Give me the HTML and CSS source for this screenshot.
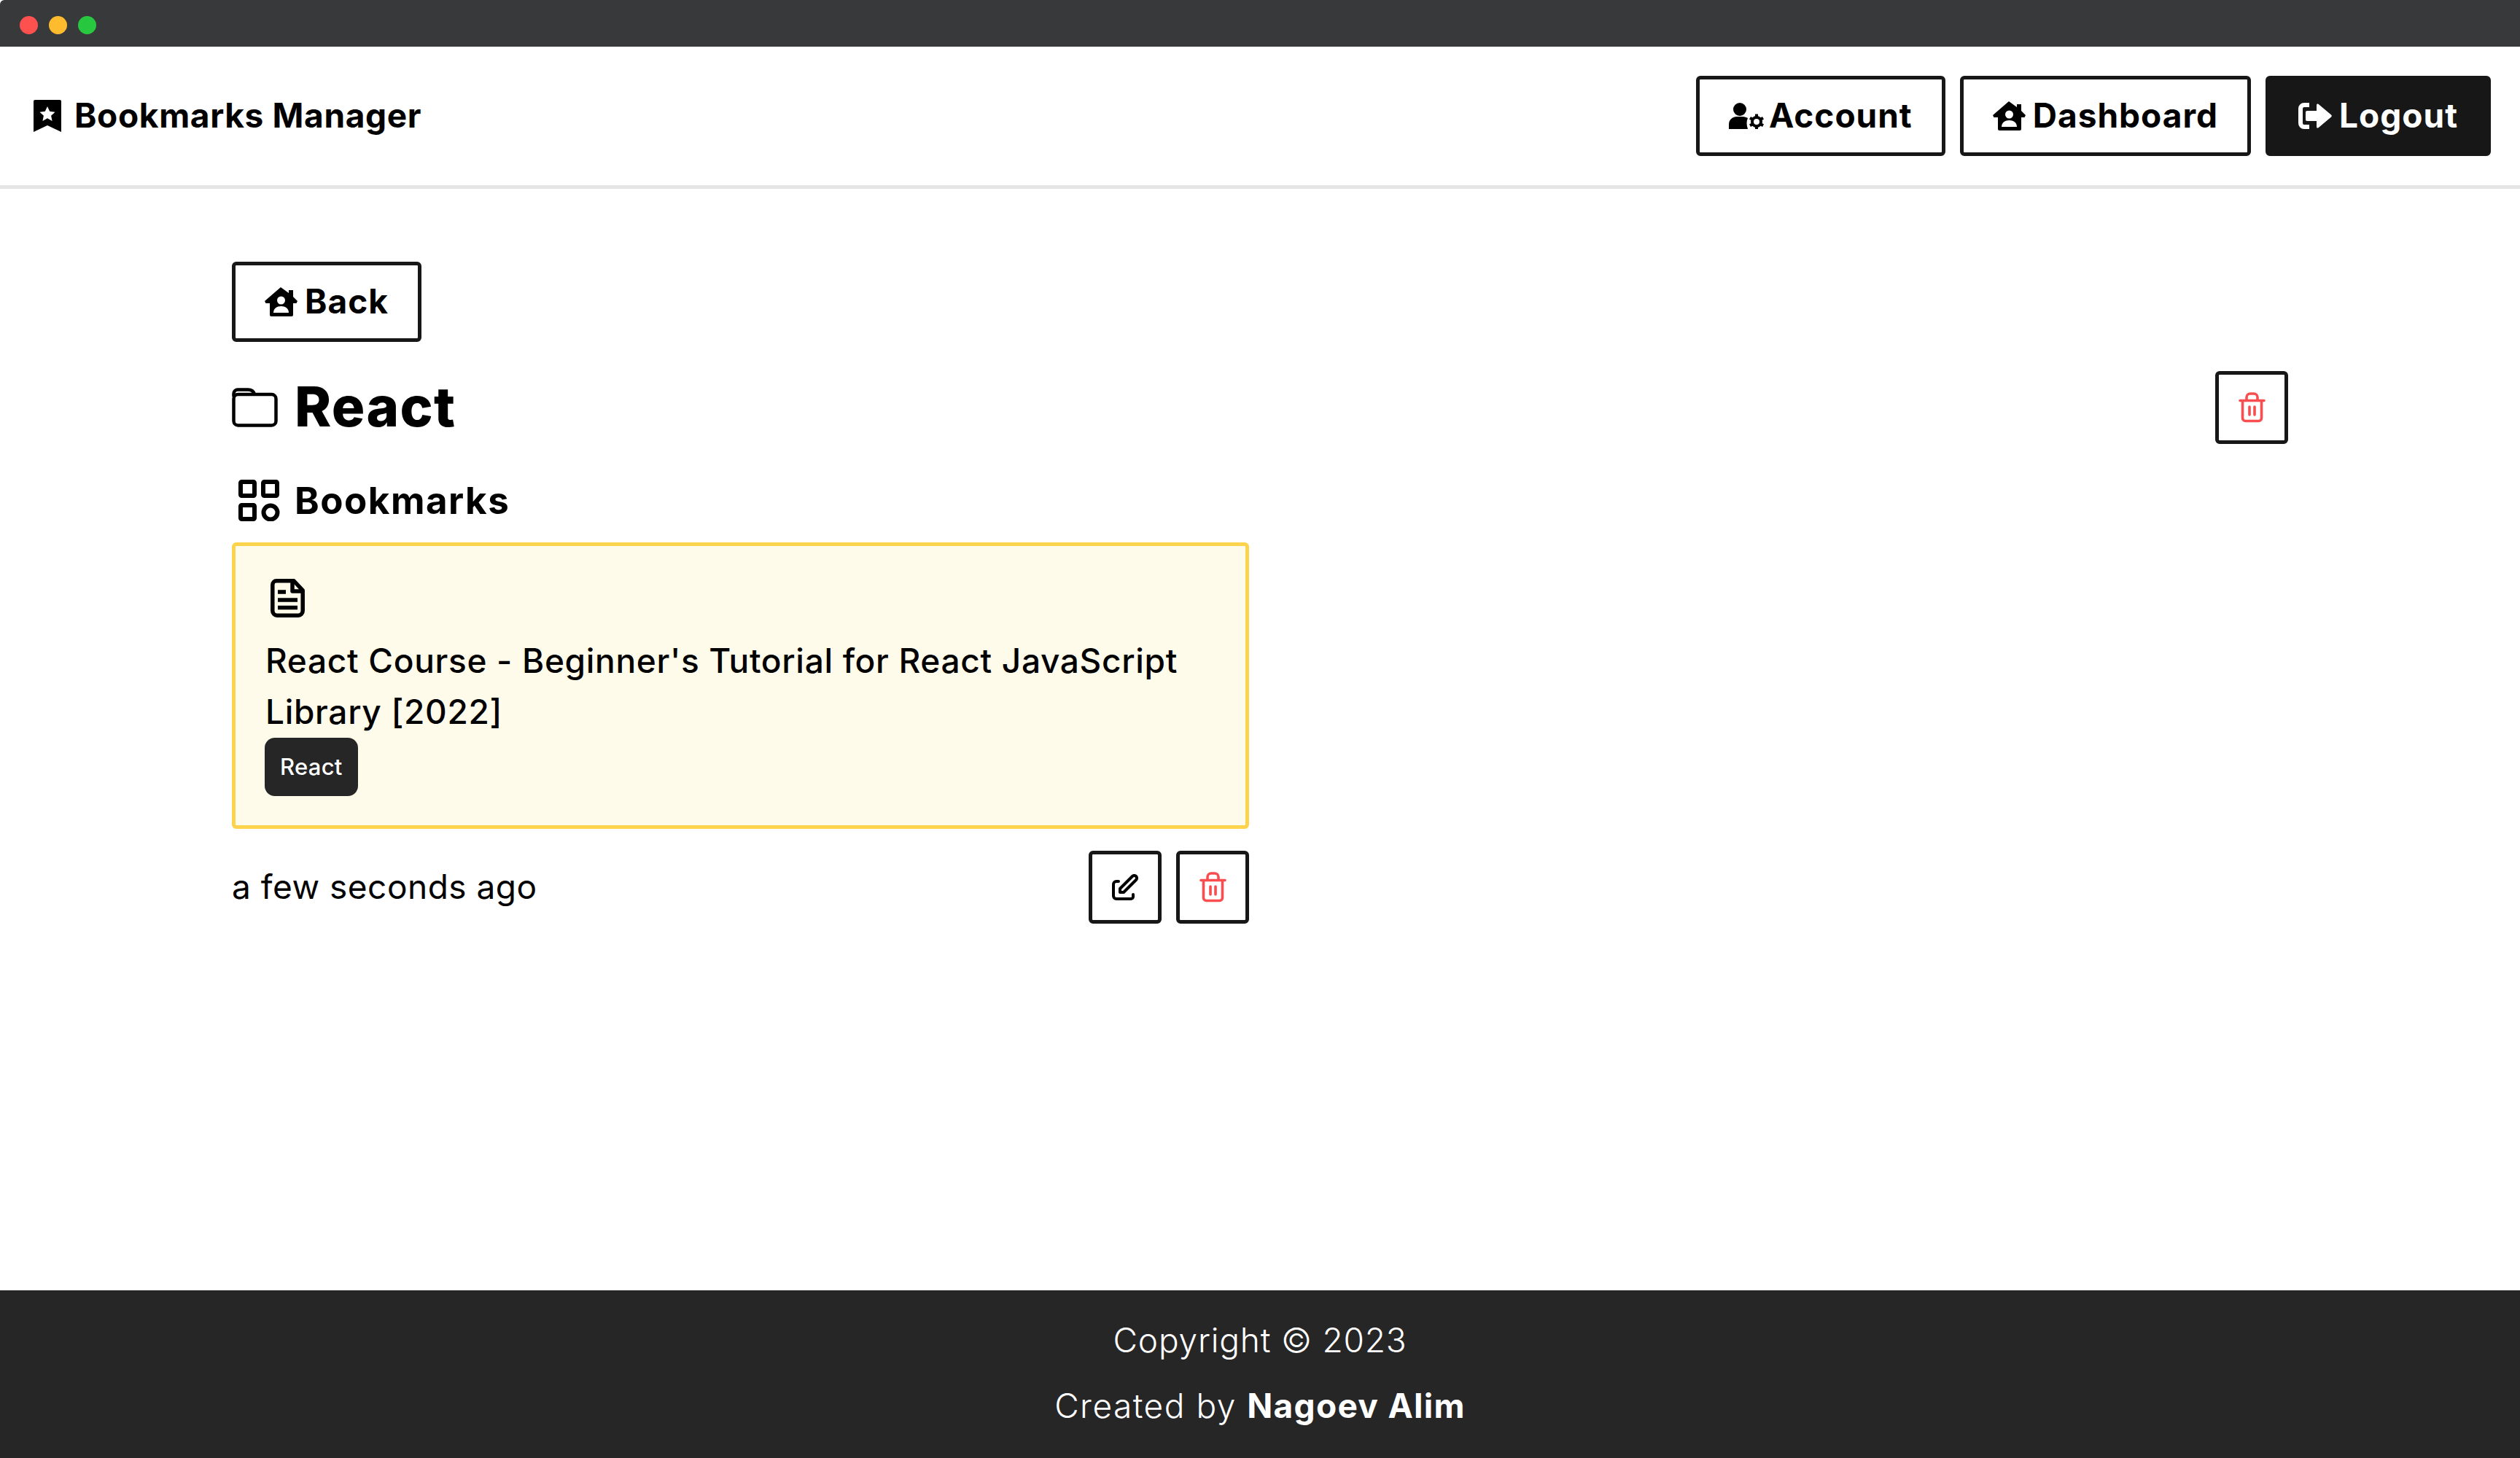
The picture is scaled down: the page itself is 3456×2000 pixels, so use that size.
FILE: index.html
```html
<!DOCTYPE html>
<html lang="en">
<head>
<meta charset="utf-8">
<title>Bookmarks Manager</title>
<link rel="stylesheet" href="styles.css">
</head>
<body>
<div class="titlebar"><span class="dot dot-red"></span><span class="dot dot-yellow"></span><span class="dot dot-green"></span></div>
<header class="nav">
  <a class="brand">
    <svg class="ic-logo" viewBox="0 0 38 44"><path fill="#000" d="M2 0h34a2 2 0 0 1 2 2v42L19 35 0 44V2a2 2 0 0 1 2-2z"/><path fill="#fff" d="M19 9l3.200 6.800 7.300.9-5.400 5 1.500 7.300-6.600-3.700L12.400 29l1.500-7.300-5.400-5 7.300-.9z"/></svg>
    <span class="brand-name">Bookmarks Manager</span>
  </a>
  <nav class="nav-actions">
    <a class="btn"><svg class="ic-account" viewBox="0 0 48 36"><circle cx="15" cy="9" r="9" fill="#000"/><path fill="#000" d="M0 36v-6c0-7 5-11 11-11h8c3 0 5 1 7 2-2 4-2 9 0 15z"/><circle cx="38" cy="26" r="6" fill="none" stroke="#000" stroke-width="4"/><path stroke="#000" stroke-width="4" d="M38 15.500v4M38 32.500v3.500M29 20.800l3.400 2M43.600 29.200l3.400 2M29 31.200l3.400-2M43.600 22.800l3.400-2"/></svg><span class="btn-label">Account</span></a>
    <a class="btn"><svg class="ic-home" viewBox="0 0 45 40"><use href="#home-user"/></svg><span class="btn-label">Dashboard</span></a>
    <a class="btn btn-dark"><svg class="ic-logout" viewBox="0 0 46 36"><path fill="#fff" d="M15 0H8a8 8 0 0 0-8 8v20a8 8 0 0 0 8 8h7v-6H8a2 2 0 0 1-2-2V8a2 2 0 0 1 2-2h7z"/><path fill="#fff" d="M12 11h13V3c0-1.500 1.500-2 2.500-1.200L45 16.500c1 1 1 2 0 3L27.500 34.200c-1 .8-2.500.3-2.500-1.200V25H12a2 2 0 0 1-2-2V13a2 2 0 0 1 2-2z"/></svg><span class="btn-label">Logout</span></a>
  </nav>
</header>
<svg class="defs" width="0" height="0"><defs>
  <g id="home-user"><path fill="#000" d="M22 0l11 8V4h6v9l6 6-1.500 3H39v16a2 2 0 0 1-2 2H9a2 2 0 0 1-2-2V22H1.500L0 19z"/><circle cx="22.500" cy="18" r="5.500" fill="#fff"/><path fill="#fff" d="M12 35c0-6 5-9 10.500-9S33 29 33 35z"/></g>
  <g id="trash"><path fill="none" stroke="#f94d4f" stroke-width="3.600" stroke-linecap="round" stroke-linejoin="round" d="M2 11.500h33M5.500 11.500v24a4 4 0 0 0 4 4h18a4 4 0 0 0 4-4v-24M11 11.500V7a5 5 0 0 1 5-5h5a5 5 0 0 1 5 5v4.500M15 20v11M22 20v11"/></g>
</defs></svg>
<main class="main">
  <a class="btn btn-back"><svg class="ic-home" viewBox="0 0 45 40"><use href="#home-user"/></svg><span class="btn-label">Back</span></a>
  <div class="folder-row">
    <h1 class="folder-title">
      <svg class="ic-folder" viewBox="0 0 63 54"><g fill="none" stroke="#000" stroke-width="4.500" stroke-linejoin="round"><rect x="2.500" y="9" width="58" height="42.500" rx="6"/><path d="M2.500 12V8a5.500 5.500 0 0 1 5.500-5.500h14c5 0 8 2.500 9 6.500"/></g></svg>
      <span class="folder-name">React</span>
    </h1>
    <a class="icon-btn"><svg class="ic-trash" viewBox="0 0 37 42"><use href="#trash"/></svg></a>
  </div>
  <h2 class="section-title">
    <svg class="ic-grid" viewBox="0 0 57 57"><g fill="none" stroke="#000" stroke-width="6" stroke-linejoin="round"><rect x="3" y="3" width="19" height="19" rx="1.500"/><rect x="34" y="3" width="19" height="19" rx="1.500"/><rect x="3" y="35" width="19" height="19" rx="1.500"/><circle cx="44" cy="45" r="9.500"/></g></svg>
    Bookmarks
  </h2>
  <section class="grid">
    <article>
      <div class="card">
        <svg class="ic-doc" viewBox="0 0 47 53"><g fill="none" stroke="#000" stroke-width="5.500" stroke-linejoin="round"><path d="M8 2.800h24l12.200 13V44a6.200 6.200 0 0 1-6.200 6.200H9A6.200 6.200 0 0 1 2.800 44V8A5.200 5.200 0 0 1 8 2.800z"/><path d="M30 2.800V17h14.200M10 18h11M10 29h27M10 39.500h27"/></g></svg>
        <p class="card-title">React Course - Beginner's Tutorial for React JavaScript Library [2022]</p>
        <span class="tag"><span class="tag-label">React</span></span>
      </div>
      <div class="meta">
        <span class="time">a few seconds ago</span>
        <div class="meta-actions">
          <a class="icon-btn"><svg class="ic-edit" viewBox="0 0 36 36"><g fill="none" stroke="#000" stroke-width="4" stroke-linecap="round" stroke-linejoin="round"><path d="M9 10H6a4 4 0 0 0-4 4v16a4 4 0 0 0 4 4h20a3 3 0 0 0 3-3v-3"/><path d="M11 20v5h5L33 8a3.500 3.500 0 0 0-5-5z"/></g></svg></a>
          <a class="icon-btn"><svg class="ic-trash" viewBox="0 0 37 42"><use href="#trash"/></svg></a>
        </div>
      </div>
    </article>
  </section>
</main>
<footer class="footer">
  <p>Copyright © 2023</p>
  <p class="credit">Created by <strong>Nagoev Alim</strong></p>
</footer>
</body>
</html>
```
FILE: styles.css
```css
* { box-sizing: border-box; }
html, body { margin: 0; padding: 0; }
body {
  width: 3456px;
  height: 2000px;
  display: flex;
  flex-direction: column;
  font-family: Inter, "Liberation Sans", sans-serif;
  color: #000;
  background: #fff;
  overflow: hidden;
}
.defs { position: absolute; }
.titlebar {
  height: 64px;
  background: #38393b;
  display: flex;
  align-items: center;
  gap: 15px;
  padding: 4px 0 0 27px;
  border-top-left-radius: 6px;
}
.dot { width: 25px; height: 25px; border-radius: 50%; }
.dot-red { background: #fd5150; }
.dot-yellow { background: #febb2e; }
.dot-green { background: #27c840; }

.nav {
  height: 195px;
  border-bottom: 5px solid #e5e5e5;
  padding: 0 40px 0 46px;
  display: flex;
  align-items: center;
  justify-content: space-between;
}
.brand {
  display: flex;
  align-items: center;
  gap: 18px;
  font-size: 46px;
  font-weight: 700;
  letter-spacing: 0.65px;
}
.brand-name { margin-bottom: 2px; }
.ic-logo { width: 38px; height: 44px; }
.nav-actions { display: flex; gap: 20px; }

.btn {
  height: 110px;
  padding: 0 40px;
  display: inline-flex;
  align-items: center;
  gap: 10px;
  border: 5px solid #171717;
  border-radius: 6px;
  font-size: 46px;
  font-weight: 700;
  letter-spacing: 1px;
}
.btn-label { margin-bottom: 3px; }
.btn-dark { background: #171717; color: #fff; }
.btn-back { align-self: flex-start; }
.ic-account { width: 48px; height: 36px; margin-right: -3px; }
.ic-home { width: 45px; height: 40px; }
.ic-logout { width: 46px; height: 36px; }

.main {
  flex: 1;
  padding: 100px 318px 0 318px;
  display: flex;
  flex-direction: column;
}
.folder-row {
  margin-top: 40px;
  height: 100px;
  display: flex;
  align-items: center;
  justify-content: space-between;
}
.folder-title {
  margin: 0;
  display: flex;
  align-items: center;
  gap: 23px;
  font-size: 76px;
  font-weight: 800;
  letter-spacing: 1.3px;
}
.folder-name { margin-bottom: 4px; }
.ic-folder { width: 63px; height: 54px; }
.section-title {
  margin: 42px 0 23px 9px;
  height: 70px;
  display: flex;
  align-items: center;
  gap: 20px;
  font-size: 51px;
  font-weight: 700;
  letter-spacing: 1.5px;
}
.ic-grid { width: 57px; height: 57px; }
.grid {
  display: grid;
  grid-template-columns: 1fr 1fr;
  gap: 30px;
}
.card {
  border: 5px solid #fcd34d;
  border-radius: 6px;
  background: #fffbeb;
  padding: 40px;
  display: flex;
  flex-direction: column;
  align-items: flex-start;
}
.ic-doc { width: 47px; height: 53px; margin: 5px 0 24px 8px; }
.card-title {
  margin: 0;
  padding-left: 1px;
  font-size: 46px;
  line-height: 70px;
  font-weight: 500;
  letter-spacing: 0.68px;
}
.tag {
  margin-top: 1px;
  height: 80px;
  padding: 0 21px;
  display: inline-flex;
  align-items: center;
  border-radius: 14px;
  background: #262626;
  color: #fff;
  font-size: 31px;
  font-weight: 500;
  letter-spacing: 0.3px;
}
.tag-label { margin-bottom: 2px; }
.meta {
  margin-top: 30px;
  display: flex;
  align-items: center;
  justify-content: space-between;
}
.time { font-size: 46px; letter-spacing: 0.5px; margin-bottom: 2px; }
.meta-actions { display: flex; gap: 20px; }
.icon-btn {
  width: 100px;
  height: 100px;
  display: flex;
  align-items: center;
  justify-content: center;
  border: 5px solid #171717;
  border-radius: 6px;
}
.ic-trash { width: 37px; height: 42px; }
.ic-edit { width: 36px; height: 36px; }

.footer {
  height: 230px;
  background: #262626;
  color: #fff;
  text-align: center;
  font-size: 46px;
  font-weight: 300;
  letter-spacing: 0.8px;
  padding-top: 40px;
}
.footer p { margin: 0 0 34px; line-height: 56px; }
.footer .credit { letter-spacing: 1.5px; }
.footer strong { font-weight: 700; letter-spacing: 1.3px; }
```
